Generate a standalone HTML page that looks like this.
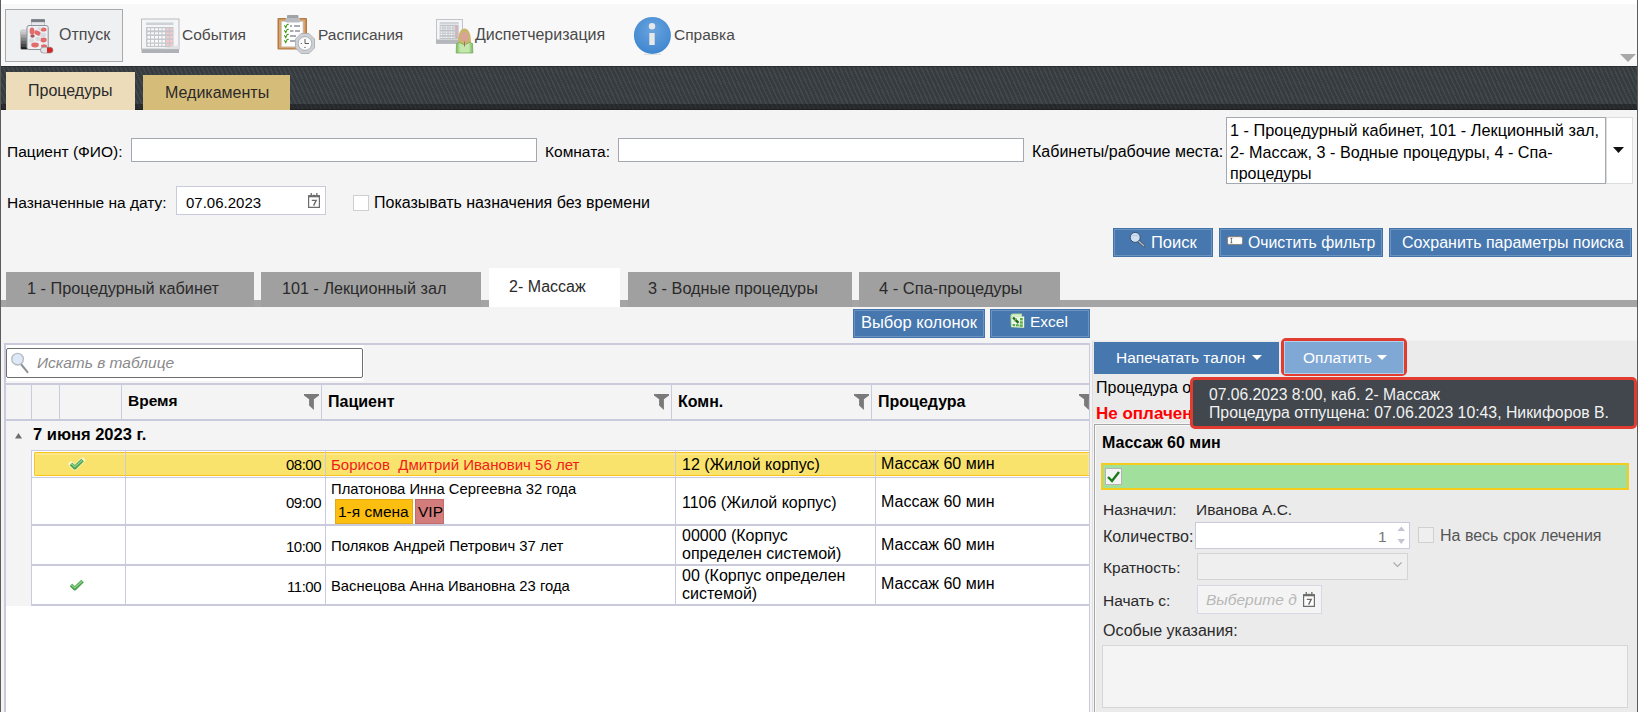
<!DOCTYPE html>
<html><head><meta charset="utf-8">
<style>
html,body{margin:0;padding:0;width:1639px;height:712px;overflow:hidden;background:#f4f4f4;}
body{position:relative;font-family:"Liberation Sans",sans-serif;color:#000;}
.a{position:absolute;box-sizing:border-box;}
.t{position:absolute;white-space:nowrap;line-height:1;font-size:15.5px;}
.b{font-weight:bold;}
.btn{position:absolute;box-sizing:border-box;background:#4677ae;border:1px solid #4472aa;box-shadow:inset 0 0 0 1px #6a93c0;}
.w{color:#fff;}
.vl{position:absolute;width:1px;background:#c9cadc;}
.hl{position:absolute;height:2px;background:#c9cadc;}
</style></head><body>

<!-- ===== TOP TOOLBAR ===== -->
<div class="a" style="left:0;top:0;width:1639px;height:4px;background:#fff"></div>
<div class="a" style="left:0;top:4px;width:1639px;height:62px;background:#f8f8f8"></div>
<div class="a" style="left:5px;top:9px;width:118px;height:53px;border:1px solid #a9a9a9;background:#eff0f2"></div>

<svg class="a" style="left:16px;top:15px" width="42" height="42" viewBox="0 0 42 42">
<defs>
<linearGradient id="can" x1="0" y1="0" x2="0" y2="1"><stop offset="0" stop-color="#e0e0e0"/><stop offset="0.45" stop-color="#808080"/><stop offset="1" stop-color="#101010"/></linearGradient>
<linearGradient id="lid" x1="0" y1="0" x2="0" y2="1"><stop offset="0" stop-color="#8a8f96"/><stop offset="1" stop-color="#5d6168"/></linearGradient>
</defs>
<rect x="4.5" y="15" width="7.5" height="19.5" rx="1.5" fill="url(#can)" stroke="#b4b4b4" stroke-width="0.7"/>
<path d="M5.5 19H11.5M5.5 22H11.5M5.5 25H11.5M5.5 28H11.5M5.5 31H11.5" stroke="#ffffff" stroke-opacity="0.25" stroke-width="0.8"/>
<rect x="15" y="4" width="14" height="3.4" rx="0.8" fill="url(#lid)"/>
<rect x="15.6" y="7" width="12.8" height="4" fill="#e6e8ec" stroke="#a8adb5" stroke-width="0.6"/>
<rect x="11" y="10.5" width="21.2" height="24" rx="2" fill="#eef0f3" stroke="#8b929c" stroke-width="1"/>
<g fill="#e26b6b">
<ellipse cx="16" cy="16" rx="2.4" ry="3.6"/><ellipse cx="21.5" cy="18" rx="3.4" ry="2.3" transform="rotate(25 21.5 18)"/>
<ellipse cx="27.5" cy="14.5" rx="3" ry="2"/><ellipse cx="27.5" cy="25" rx="3.2" ry="2.4"/>
<ellipse cx="19" cy="30" rx="3.8" ry="2.4"/><ellipse cx="28" cy="31" rx="3" ry="1.8"/>
</g>
<g fill="#d8dce0">
<ellipse cx="27" cy="20" rx="3.2" ry="2.2"/><ellipse cx="22" cy="24" rx="2.8" ry="2.2"/><ellipse cx="15.5" cy="25.5" rx="2.5" ry="2.3"/><ellipse cx="23.5" cy="13.5" rx="2" ry="1.6"/>
</g>
<ellipse cx="16.5" cy="21" rx="2.2" ry="1.8" fill="#a05a5a"/>
<rect x="24.5" y="32.2" width="12.5" height="5.8" rx="2.9" fill="#d42828"/>
<rect x="24.5" y="32.2" width="6.5" height="5.8" rx="2.9" fill="#dde4ea"/>
<rect x="28" y="32.2" width="3" height="5.8" fill="#dde4ea"/>
<rect x="24.5" y="32.2" width="12.5" height="5.8" rx="2.9" fill="none" stroke="#8a8a8a" stroke-width="0.6"/>
</svg>
<svg class="a" style="left:138px;top:15px" width="44" height="42" viewBox="0 0 44 42">
<rect x="3.5" y="33" width="37.5" height="5" fill="#aeb2b6"/>
<rect x="3.5" y="4" width="37.5" height="30" fill="#f3f5f7" stroke="#b8bcc0" stroke-width="1"/>
<rect x="8" y="7.5" width="27.5" height="2.5" fill="#ced2d6"/>
<rect x="8" y="12" width="27.5" height="20" fill="#c4c8cc"/>
<g fill="#fafafa">
<rect x="9.5" y="13.3" width="2.5" height="2"/><rect x="13" y="13.3" width="3" height="2"/><rect x="17" y="13.3" width="3" height="2"/><rect x="21" y="13.3" width="2.5" height="2"/><rect x="24.5" y="13.3" width="2.5" height="2"/>
<rect x="9.5" y="17.3" width="2.5" height="2"/><rect x="13" y="17.3" width="3" height="2"/><rect x="17" y="17.3" width="3" height="2"/><rect x="21" y="17.3" width="2.5" height="2"/><rect x="24.5" y="17.3" width="2.5" height="2"/>
<rect x="9.5" y="21" width="2.5" height="2.5"/><rect x="13" y="21" width="3" height="2.5"/><rect x="17" y="21" width="3" height="2.5"/><rect x="21" y="21" width="2.5" height="2.5"/><rect x="24.5" y="21" width="2.5" height="2.5"/>
<rect x="9.5" y="25" width="2.5" height="2.5"/><rect x="13" y="25" width="3" height="2.5"/><rect x="17" y="25" width="3" height="2.5"/><rect x="21" y="25" width="2.5" height="2.5"/><rect x="24.5" y="25" width="2.5" height="2.5"/>
<rect x="9.5" y="28.8" width="2.5" height="2"/><rect x="13" y="28.8" width="3" height="2"/><rect x="17" y="28.8" width="3" height="2"/><rect x="21" y="28.8" width="2.5" height="2"/><rect x="24.5" y="28.8" width="2.5" height="2"/>
</g>
<g fill="#f4c8cc">
<rect x="28" y="13.3" width="3" height="2"/><rect x="32" y="13.3" width="3" height="2"/>
<rect x="28" y="17.3" width="3" height="2"/><rect x="32" y="17.3" width="3" height="2"/>
<rect x="28" y="21" width="3" height="2.5"/><rect x="32" y="21" width="3" height="2.5"/>
<rect x="28" y="25" width="3" height="2.5"/><rect x="32" y="25" width="3" height="2.5"/>
<rect x="28" y="28.8" width="3" height="2"/><rect x="32" y="28.8" width="3" height="2"/>
</g>
<path d="M20 34 L41 30 L41 34 Z" fill="#e0e3e6"/>
</svg>
<svg class="a" style="left:274px;top:12px" width="44" height="44" viewBox="0 0 44 44">
<rect x="3.5" y="6" width="29.5" height="31.5" rx="1" fill="#b37a44"/>
<rect x="5" y="7.3" width="26.5" height="29" fill="#d9a36a"/>
<rect x="7.5" y="9.3" width="21.5" height="25.5" fill="#fff" stroke="#c5cbd2" stroke-width="0.8"/>
<rect x="13" y="3" width="11.5" height="4" rx="1" fill="#9fa3a8"/>
<rect x="11.5" y="6" width="14.5" height="4.5" rx="1" fill="#b9bdc2"/>
<g stroke="#3a9a10" stroke-width="1.1" fill="none">
<path d="M10.4 13.2 L11.8 15.6 L13.2 12.4 L14.8 12.2"/><path d="M10.4 18.2 L11.8 20.6 L13.2 17.4 L14.8 17.2"/><path d="M10.4 23.2 L11.8 25.6 L13.2 22.4 L14.8 22.2"/><path d="M10.4 28.2 L11.8 30.6 L13.2 27.4 L14.8 27.2"/>
</g>
<g fill="#a9adb2"><rect x="16" y="13" width="2" height="2"/><rect x="20" y="13" width="6" height="2"/><rect x="16" y="18" width="3.5" height="2"/><rect x="21" y="18" width="5" height="2"/><rect x="16" y="23" width="6" height="2"/><rect x="16" y="28" width="5" height="2"/></g>
<path d="M27 21.5 L35 21.5 L40.5 27 L40.5 36 L35 41.5 L27 41.5 L21.5 36 L21.5 27 Z" fill="#cdd0d4" stroke="#a4a8ad" stroke-width="0.8" stroke-linejoin="round"/>
<circle cx="31" cy="31.5" r="6.8" fill="#fbfbfb" stroke="#9a9ea2" stroke-width="0.7"/>
<path d="M31 27 V31.5 H35" stroke="#333" stroke-width="0.8" fill="none"/>
<circle cx="27.3" cy="31.5" r="0.6" fill="#333"/><circle cx="31" cy="35.3" r="0.6" fill="#333"/>
</svg>
<svg class="a" style="left:432px;top:14px" width="46" height="42" viewBox="0 0 46 42">
<defs><linearGradient id="bod" x1="0" y1="0" x2="1" y2="0"><stop offset="0" stop-color="#7cb860"/><stop offset="0.25" stop-color="#c4e8ac"/><stop offset="0.75" stop-color="#c4e8ac"/><stop offset="1" stop-color="#7cb860"/></linearGradient></defs>
<rect x="4.5" y="5.5" width="26" height="24" fill="#f3f5f7" stroke="#c0c4c8" stroke-width="1"/>
<rect x="4" y="25.5" width="27" height="4" fill="#b4b8bc"/>
<rect x="7.7" y="8" width="19" height="2.5" fill="#d0d4d8"/>
<rect x="7.7" y="11" width="19" height="14" fill="#bfc3c8"/>
<g fill="#f8f8f8">
<path d="M8.5 12.3h2v1.2h-2zM11.5 12.3h1.2v1.2h-1.2zM13.5 12.3h2v1.2h-2zM16.5 12.3h1.2v1.2h-1.2zM18.5 12.3h2v1.2h-2zM21.5 12.3h1.2v1.2h-1.2z"/>
<path d="M8.5 14.5h2v1.2h-2zM11.5 14.5h1.2v1.2h-1.2zM13.5 14.5h2v1.2h-2zM16.5 14.5h1.2v1.2h-1.2zM18.5 14.5h2v1.2h-2zM21.5 14.5h1.2v1.2h-1.2z"/>
<path d="M8.5 17.5h2v1.2h-2zM11.5 17.5h1.2v1.2h-1.2zM13.5 17.5h2v1.2h-2zM16.5 17.5h1.2v1.2h-1.2zM18.5 17.5h2v1.2h-2zM21.5 17.5h1.2v1.2h-1.2z"/>
<path d="M8.5 19.7h2v1.2h-2zM11.5 19.7h1.2v1.2h-1.2zM13.5 19.7h2v1.2h-2zM16.5 19.7h1.2v1.2h-1.2zM18.5 19.7h2v1.2h-2zM21.5 19.7h1.2v1.2h-1.2z"/>
<path d="M8.5 22.7h2v1.2h-2zM11.5 22.7h1.2v1.2h-1.2zM13.5 22.7h2v1.2h-2zM16.5 22.7h1.2v1.2h-1.2zM18.5 22.7h2v1.2h-2zM21.5 22.7h1.2v1.2h-1.2z"/>
</g>
<g fill="#f0a0a8"><path d="M23.5 12.3h2v1.2h-2zM23.5 14.5h2v1.2h-2zM23.5 17.5h2v1.2h-2zM23.5 19.7h2v1.2h-2zM23.5 22.7h2v1.2h-2z"/></g>
<path d="M26 30 Q26 14.5 32.5 14.5 Q39 14.5 39 30 Z" fill="#c8b66a"/>
<path d="M24.5 29.5 L27.5 28.5 L32.5 31 L37.5 28.5 L40.5 29.5 L40.8 39 H24.2 Z" fill="url(#bod)" stroke="#6aa850" stroke-width="0.7"/>
<ellipse cx="32.5" cy="22.8" rx="3.9" ry="4.8" fill="#d9a398"/>
<path d="M32.5 27.5 V32.5" stroke="#b06a6a" stroke-width="1"/>
</svg>
<svg class="a" style="left:632px;top:15px" width="42" height="42" viewBox="0 0 42 42">
<defs><radialGradient id="ig" cx="0.5" cy="0.35" r="0.65"><stop offset="0" stop-color="#6aa4de"/><stop offset="1" stop-color="#3f86d0"/></radialGradient></defs>
<circle cx="20.4" cy="20.4" r="18.5" fill="url(#ig)"/>
<rect x="17.3" y="18" width="5.4" height="12" fill="#e8e8e8"/>
<circle cx="20" cy="11.3" r="3.2" fill="#e8e8e8"/>
<path d="M12 39.3 H29" stroke="#c8c8c8" stroke-width="0.6"/>
</svg>

<div class="t" style="left:59px;top:27px;font-size:16px;color:#4a4a4a">Отпуск</div>
<div class="t" style="left:182px;top:27px;color:#4a4a4a">События</div>
<div class="t" style="left:318px;top:27px;color:#4a4a4a">Расписания</div>
<div class="t" style="left:475px;top:27px;font-size:16px;color:#4a4a4a">Диспетчеризация</div>
<div class="t" style="left:674px;top:27px;color:#4a4a4a">Справка</div>
<svg class="a" style="left:1620px;top:54px" width="16" height="9"><path d="M0 0H16L8 8Z" fill="#a8a8a8"/></svg>

<!-- ===== DARK BAR ===== -->
<div class="a" style="left:1px;top:66px;width:1638px;height:44px;background:repeating-linear-gradient(65deg,#363b3f 0 2.6px,#43484c 2.6px 4.1px);border-top:1px solid #2a2e31"></div>
<div class="a" style="left:1px;top:104px;width:1638px;height:6px;background:repeating-linear-gradient(65deg,#25292c 0 2.6px,#2c3033 2.6px 4.1px);border-bottom:1px solid #1e2124"></div>
<div class="a" style="left:6px;top:72px;width:129px;height:38px;background:#ecdcb9"></div>
<div class="a" style="left:143px;top:75px;width:147px;height:35px;background:#d6bc79"></div>
<div class="t" style="left:28px;top:83px;font-size:16px;color:#2a2a2a">Процедуры</div>
<div class="t" style="left:165px;top:85px;font-size:16px;color:#2a2a2a">Медикаменты</div>

<!-- ===== FORM ===== -->
<div class="t" style="left:7px;top:144px">Пациент (ФИО):</div>
<div class="a" style="left:131px;top:138px;width:406px;height:24px;border:1px solid #a4a8b1;background:#fff"></div>
<div class="t" style="left:545px;top:144px">Комната:</div>
<div class="a" style="left:618px;top:138px;width:406px;height:24px;border:1px solid #a4a8b1;background:#fff"></div>
<div class="t" style="left:1032px;top:144px;font-size:16px">Кабинеты/рабочие места:</div>
<div class="a" style="left:1226px;top:117px;width:380px;height:67px;border:1px solid #a4a8b1;background:#fff"></div>
<div class="t" style="left:1230px;top:122px;font-size:16.3px">1 - Процедурный кабинет, 101 - Лекционный зал,</div>
<div class="t" style="left:1230px;top:144px;font-size:16.2px">2- Массаж, 3 - Водные процедуры, 4 - Спа-</div>
<div class="t" style="left:1230px;top:166px;font-size:16px">процедуры</div>
<div class="a" style="left:1606px;top:117px;width:27px;height:67px;border:1px solid #dcdcdc;background:#fff"></div>
<svg class="a" style="left:1613px;top:147px" width="12" height="7"><path d="M0 0H11L5.5 6Z" fill="#111"/></svg>

<div class="t" style="left:7px;top:195px">Назначенные на дату:</div>
<div class="a" style="left:176px;top:186px;width:150px;height:29px;border:1px solid #c9cadc;background:#fff"></div>
<div class="t" style="left:186px;top:195px;font-size:15px">07.06.2023</div>
<svg class="a" style="left:307px;top:192px" width="14" height="16" viewBox="0 0 14 16">
<path d="M1.6 3.9 H12.4 V15.4 H1.6 Z" fill="#fff" stroke="#6c6c6c" stroke-width="1.2"/>
<path d="M1 3.3 H13 V5.3 H1 Z" fill="#6c6c6c"/>
<path d="M3.6 1 H4.9 V5 H3.6Z M9.2 1 H10.5 V5 H9.2Z M6.1 2.8 H7.9 V5 H6.1Z" fill="#6c6c6c"/>
<path d="M4.8 8.4 H9.2 L6.6 13.6" stroke="#6c6c6c" stroke-width="1.4" fill="none"/>
</svg>
<div class="a" style="left:353px;top:195px;width:16px;height:16px;border:1px solid #cfcfcf;background:#fff"></div>
<div class="t" style="left:374px;top:195px;font-size:16px">Показывать назначения без времени</div>

<!-- buttons -->
<div class="btn" style="left:1113px;top:228px;width:100px;height:29px"></div>
<svg class="a" style="left:1128px;top:230px" width="18" height="18" viewBox="0 0 18 18">
<path d="M10 10.5 L15.8 15.8" stroke="#3a4f66" stroke-width="2.6" stroke-linecap="round"/>
<path d="M10 10.5 L15.8 15.8" stroke="#b8bcc0" stroke-width="1.4" stroke-linecap="round"/>
<circle cx="7.2" cy="7.4" r="5" fill="#cfe0f2" stroke="#34506e" stroke-width="1"/>
<path d="M3.5 6.3 Q7 4.5 10.5 6" stroke="#a8c4e0" stroke-width="0.8" fill="none"/>
</svg>
<div class="t w" style="left:1151px;top:234px;font-size:16.5px">Поиск</div>
<div class="btn" style="left:1219px;top:228px;width:164px;height:29px"></div>
<svg class="a" style="left:1226px;top:236px" width="18" height="10" viewBox="0 0 18 10">
<rect x="1.5" y="0.7" width="15" height="7.8" rx="1.6" fill="#fff" stroke="#8f8070" stroke-width="0.9"/>
<path d="M5.4 2.3 V6.8 M4.4 2.3 H6.4 M4.4 6.8 H6.4" stroke="#555" stroke-width="0.8"/>
</svg>
<div class="t w" style="left:1248px;top:235px;font-size:15.8px">Очистить фильтр</div>
<div class="btn" style="left:1389px;top:228px;width:243px;height:29px"></div>
<div class="t w" style="left:1402px;top:235px;font-size:16px">Сохранить параметры поиска</div>

<!-- ===== ROOM TABS ===== -->
<div class="a" style="left:1px;top:300px;width:1638px;height:7px;background:#a5a5a5"></div>
<div class="a" style="left:6px;top:272px;width:248px;height:35px;background:#a0a0a0"></div>
<div class="a" style="left:261px;top:272px;width:220px;height:35px;background:#a0a0a0"></div>
<div class="a" style="left:489px;top:268px;width:131px;height:39px;background:#fff"></div>
<div class="a" style="left:628px;top:272px;width:224px;height:35px;background:#a0a0a0"></div>
<div class="a" style="left:859px;top:272px;width:201px;height:35px;background:#a0a0a0"></div>
<div class="t" style="left:27px;top:280px;font-size:16.3px;color:#2a2a2a">1 - Процедурный кабинет</div>
<div class="t" style="left:282px;top:280px;font-size:16.2px;color:#2a2a2a">101 - Лекционный зал</div>
<div class="t" style="left:509px;top:279px;font-size:16px;color:#2a2a2a">2- Массаж</div>
<div class="t" style="left:648px;top:280px;font-size:16.3px;color:#2a2a2a">3 - Водные процедуры</div>
<div class="t" style="left:879px;top:280px;font-size:16.5px;color:#2a2a2a">4 - Спа-процедуры</div>

<div class="btn" style="left:853px;top:309px;width:132px;height:29px"></div>
<div class="t w" style="left:861px;top:314px;font-size:16.5px">Выбор колонок</div>
<div class="btn" style="left:990px;top:309px;width:100px;height:29px"></div>
<svg class="a" style="left:1008px;top:312px" width="18" height="18" viewBox="0 0 18 18">
<path d="M2.3 4 Q2.5 1.6 5 1.6 H14 V4.5 L16.3 4.3 V15.8 L3 15.2 Z" fill="#a8d890"/>
<path d="M3.2 4.6 Q3.5 2.5 5.3 2.5 H13.3 V4.6 Z" fill="#dcefd0"/>
<path d="M3.6 4.8 H16 V15.6 L3.6 15 Z" fill="#eef6ea"/>
<g fill="#5aae48"><rect x="12" y="6" width="2.8" height="2.4"/><rect x="12" y="9.3" width="2.8" height="2.4"/><rect x="11.6" y="12.4" width="3.2" height="2.4"/><rect x="4.6" y="12" width="2.6" height="2.2"/><rect x="8" y="12.2" width="2.8" height="2.2"/></g>
<path d="M5 5.5 L10.5 10.8" stroke="#1b6a14" stroke-width="2.4"/>
<path d="M8.5 6 L6 9.5" stroke="#7cc070" stroke-width="1.2"/>
</svg>
<div class="t w" style="left:1030px;top:314px;font-size:15.5px">Excel</div>

<!-- ===== TABLE ===== -->
<div class="a" style="left:4px;top:343px;width:1086px;height:380px;border:2px solid #c9cadc;border-right:1px solid #c9cadc;background:#fff"></div>
<div class="a" style="left:6px;top:345px;width:1083px;height:38px;background:#f4f4f4"></div>
<div class="a" style="left:6px;top:345px;width:358px;height:36px;background:#fff"></div><div class="a" style="left:6px;top:348px;width:357px;height:30px;border:1px solid #6e6e6e;border-radius:2px;background:#fff"></div>
<svg class="a" style="left:9px;top:351px" width="22" height="24" viewBox="0 0 22 24">
<path d="M12.3 13.5 L18.5 21.2" stroke="#8e9296" stroke-width="2" stroke-linecap="round"/>
<circle cx="8.6" cy="8.2" r="5.8" fill="#dde9f6" stroke="#b8bcc4" stroke-width="1.4"/>
</svg>
<div class="t" style="left:37px;top:355px;font-style:italic;color:#8a8a8a">Искать в таблице</div>
<div class="hl" style="left:6px;top:383px;width:1083px"></div>
<div class="a" style="left:6px;top:385px;width:1083px;height:34px;background:#f4f4f4"></div>
<div class="hl" style="left:6px;top:419px;width:1083px"></div>
<div class="vl" style="left:31px;top:385px;height:34px"></div>
<div class="vl" style="left:59px;top:385px;height:34px"></div>
<div class="vl" style="left:121px;top:385px;height:34px"></div>
<div class="vl" style="left:321px;top:385px;height:34px"></div>
<div class="vl" style="left:671px;top:385px;height:34px"></div>
<div class="vl" style="left:871px;top:385px;height:34px"></div>
<div class="t b" style="left:128px;top:393px;font-size:15.5px">Время</div>
<div class="t b" style="left:328px;top:394px;font-size:16px">Пациент</div>
<div class="t b" style="left:678px;top:394px;font-size:16px">Комн.</div>
<div class="t b" style="left:878px;top:394px;font-size:16px">Процедура</div>
<svg class="a" style="left:304px;top:394px" width="16" height="17" viewBox="0 0 16 17"><path d="M0 0 H15 V1.5 L9.9 5.3 V16 L5.1 11.6 V5.3 L0 1.5Z" fill="#7a7a7a"/></svg><svg class="a" style="left:654px;top:394px" width="16" height="17" viewBox="0 0 16 17"><path d="M0 0 H15 V1.5 L9.9 5.3 V16 L5.1 11.6 V5.3 L0 1.5Z" fill="#7a7a7a"/></svg><svg class="a" style="left:854px;top:394px" width="16" height="17" viewBox="0 0 16 17"><path d="M0 0 H15 V1.5 L9.9 5.3 V16 L5.1 11.6 V5.3 L0 1.5Z" fill="#7a7a7a"/></svg><div class="a" style="left:1079px;top:394px;width:10px;height:17px;overflow:hidden"><svg class="a" style="left:0;top:0" width="16" height="17" viewBox="0 0 16 17"><path d="M0 0 H15 V1.5 L9.9 5.3 V16 L5.1 11.6 V5.3 L0 1.5Z" fill="#7a7a7a"/></svg></div>

<div class="a" style="left:6px;top:421px;width:1083px;height:29px;background:#f4f4f4"></div>
<div class="a" style="left:6px;top:450px;width:25px;height:156px;background:#f4f4f4"></div>
<svg class="a" style="left:15px;top:433px" width="8" height="6"><path d="M0 5.5H7L3.5 0Z" fill="#6e6e6e"/></svg>
<div class="t b" style="left:33px;top:426px;font-size:16.5px">7 июня 2023 г.</div>

<!-- rows -->
<div class="a" style="left:31px;top:450px;width:1058px;height:156px;background:#fff"></div>
<div class="hl" style="left:31px;top:450px;width:1058px;height:1px"></div>
<div class="a" style="left:34px;top:452px;width:1055px;height:24px;background:#f9e36c;border:1px solid #fbc21c;border-right:none;border-radius:2px 0 0 2px;box-shadow:inset 0 1px 0 1px #fbe78c"></div>
<div class="hl" style="left:31px;top:477px;width:1058px;height:1px"></div>
<div class="hl" style="left:31px;top:524px;width:1058px"></div>
<div class="hl" style="left:31px;top:564px;width:1058px"></div>
<div class="hl" style="left:31px;top:604px;width:1058px"></div>
<div class="vl" style="left:31px;top:450px;height:156px"></div>
<div class="vl" style="left:125px;top:450px;height:156px"></div>
<div class="vl" style="left:325px;top:450px;height:156px"></div>
<div class="vl" style="left:675px;top:450px;height:156px"></div>
<div class="vl" style="left:875px;top:450px;height:156px"></div>
<svg class="a" style="left:68px;top:457px" width="18" height="15" viewBox="0 0 18 15"><path d="M3 7 L6.8 10.6 L14.6 3" stroke="#fff" stroke-width="5.2" fill="none" stroke-linecap="round" stroke-linejoin="round" opacity="0.6"/><path d="M3 7 L6.8 10.6 L14.6 3" stroke="#4a9e4c" stroke-width="3.6" fill="none" stroke-linejoin="round"/><path d="M3.4 6.8 L6.8 9.9 L14.3 2.9" stroke="#8fd68a" stroke-width="1.3" fill="none"/></svg><svg class="a" style="left:68px;top:578px" width="18" height="15" viewBox="0 0 18 15"><path d="M3 7 L6.8 10.6 L14.6 3" stroke="#fff" stroke-width="5.2" fill="none" stroke-linecap="round" stroke-linejoin="round" opacity="0.6"/><path d="M3 7 L6.8 10.6 L14.6 3" stroke="#4a9e4c" stroke-width="3.6" fill="none" stroke-linejoin="round"/><path d="M3.4 6.8 L6.8 9.9 L14.3 2.9" stroke="#8fd68a" stroke-width="1.3" fill="none"/></svg>

<div class="t" style="left:241px;width:80px;text-align:right;top:457px;font-size:15px;letter-spacing:-0.5px;margin-right:-0.5px">08:00</div>
<div class="t" style="left:331px;top:457px;font-size:15px;color:#f01c1c">Борисов&nbsp; Дмитрий Иванович 56 лет</div>
<div class="t" style="left:682px;top:457px;font-size:16px">12 (Жилой корпус)</div>
<div class="t" style="left:881px;top:456px;font-size:16px">Массаж 60 мин</div>

<div class="t" style="left:241px;width:80px;text-align:right;top:495px;font-size:15px;letter-spacing:-0.5px">09:00</div>
<div class="t" style="left:331px;top:482px;font-size:14.8px">Платонова Инна Сергеевна 32 года</div>
<div class="a" style="left:335px;top:499px;width:78px;height:25px;background:#fcbf10;border:1px solid #e2ab18"></div>
<div class="a" style="left:415px;top:499px;width:29px;height:25px;background:#d27c7b;border:1px solid #c46a6a"></div>
<div class="t" style="left:338px;top:504px;font-size:15.5px">1-я смена</div>
<div class="t" style="left:418px;top:504px;font-size:15.5px">VIP</div>
<div class="t" style="left:682px;top:495px;font-size:16px">1106 (Жилой корпус)</div>
<div class="t" style="left:881px;top:494px;font-size:16px">Массаж 60 мин</div>

<div class="t" style="left:241px;width:80px;text-align:right;top:539px;font-size:15px;letter-spacing:-0.5px">10:00</div>
<div class="t" style="left:331px;top:539px;font-size:14.9px">Поляков Андрей Петрович 37 лет</div>
<div class="t" style="left:682px;top:528px;font-size:16px">00000 (Корпус</div>
<div class="t" style="left:682px;top:546px;font-size:16px">определен системой)</div>
<div class="t" style="left:881px;top:537px;font-size:16px">Массаж 60 мин</div>

<div class="t" style="left:241px;width:80px;text-align:right;top:579px;font-size:15px;letter-spacing:-0.5px">11:00</div>
<div class="t" style="left:331px;top:579px;font-size:14.8px">Васнецова Анна Ивановна 23 года</div>
<div class="t" style="left:682px;top:568px;font-size:16px">00 (Корпус определен</div>
<div class="t" style="left:682px;top:586px;font-size:16px">системой)</div>
<div class="t" style="left:881px;top:576px;font-size:16px">Массаж 60 мин</div>

<!-- ===== RIGHT PANEL ===== -->
<div class="a" style="left:1092px;top:340px;width:547px;height:372px;background:#ebebeb;border-left:1px solid #dedede;border-top:1px solid #f0f0f0"></div>
<div class="btn" style="left:1094px;top:342px;width:185px;height:32px;box-shadow:none;border:none"></div>
<div class="t w" style="left:1116px;top:350px;font-size:15.5px">Напечатать талон</div>
<svg class="a" style="left:1252px;top:355px" width="11" height="6"><path d="M0 0H10L5 5Z" fill="#fff"/></svg>
<div class="a" style="left:1281px;top:338px;width:126px;height:38px;border:3px solid #e23b30;border-radius:5px"></div>
<div class="a" style="left:1284px;top:341px;width:120px;height:33px;background:#7fa8d4;border:1px solid #b0d0ec"></div>
<div class="t w" style="left:1303px;top:350px;font-size:15.5px">Оплатить</div>
<svg class="a" style="left:1377px;top:355px" width="11" height="6"><path d="M0 0H10L5 5Z" fill="#fff"/></svg>

<div class="t" style="left:1096px;top:380px;font-size:16px">Процедура отпущена</div>
<div class="t b" style="left:1096px;top:405px;font-size:17px;color:#f00">Не оплачена</div>

<div class="a" style="left:1093px;top:423px;width:546px;height:300px;border:1px solid #f6f6f6;border-right:none;background:#ebebeb"></div><div class="a" style="left:1094px;top:424px;width:545px;height:300px;border:1px solid #a6a6a6;border-right:none;box-shadow:inset 1px 1px 0 #fafafa"></div>
<div class="t b" style="left:1102px;top:435px;font-size:16px">Массаж 60 мин</div>
<div class="a" style="left:1101px;top:463px;width:528px;height:27px;background:#a0e09c;border:2px solid #f4cc1c"></div>
<div class="a" style="left:1105px;top:468px;width:17px;height:17px;border:1px solid #b4b4b4;background:#f4f4f4"></div>
<svg class="a" style="left:1106px;top:470px" width="16" height="14"><path d="M2 7 L6 11 L13 2" stroke="#1a7a1a" stroke-width="2.4" fill="none"/></svg>
<div class="t" style="left:1103px;top:502px;font-size:15.5px;color:#2a2a2a">Назначил:</div>
<div class="t" style="left:1196px;top:502px;font-size:15.5px;color:#2a2a2a">Иванова А.С.</div>
<div class="t" style="left:1103px;top:529px;font-size:16px;color:#2a2a2a">Количество:</div>
<div class="a" style="left:1195px;top:522px;width:215px;height:27px;border:1px solid #c9cadc;background:#fff"></div>
<div class="t" style="left:1378px;top:529px;font-size:15.5px;color:#777">1</div>
<svg class="a" style="left:1397px;top:526px" width="9" height="19"><path d="M0.5 5H8L4.25 0.5Z M0.5 13H8L4.25 18Z" fill="#c4c4d4"/></svg>
<div class="a" style="left:1418px;top:527px;width:16px;height:16px;border:1px solid #d0d0d0;background:#efefef"></div>
<div class="t" style="left:1440px;top:528px;font-size:16px;color:#555">На весь срок лечения</div>
<div class="t" style="left:1103px;top:560px;font-size:15.5px;color:#2a2a2a">Кратность:</div>
<div class="a" style="left:1197px;top:553px;width:211px;height:27px;border:1px solid #d4d4d4;background:#efefef"></div>
<svg class="a" style="left:1393px;top:562px" width="9" height="6"><path d="M0.5 0.5 L4.5 4.5 L8.5 0.5" stroke="#aaa" stroke-width="1.2" fill="none"/></svg>
<div class="t" style="left:1103px;top:593px;font-size:15.5px;color:#2a2a2a">Начать с:</div>
<div class="a" style="left:1197px;top:585px;width:125px;height:29px;border:1px solid #d8d8e4;background:#f4f4f4"></div>
<div class="t" style="left:1206px;top:592px;font-size:15.5px;font-style:italic;color:#b8b8b8">Выберите д</div>
<svg class="a" style="left:1302px;top:591px" width="14" height="16" viewBox="0 0 14 16">
<path d="M1.6 3.9 H12.4 V15.4 H1.6 Z" fill="#fff" stroke="#6c6c6c" stroke-width="1.2"/>
<path d="M1 3.3 H13 V5.3 H1 Z" fill="#6c6c6c"/>
<path d="M3.6 1 H4.9 V5 H3.6Z M9.2 1 H10.5 V5 H9.2Z M6.1 2.8 H7.9 V5 H6.1Z" fill="#6c6c6c"/>
<path d="M4.8 8.4 H9.2 L6.6 13.6" stroke="#6c6c6c" stroke-width="1.4" fill="none"/>
</svg>
<div class="t" style="left:1103px;top:623px;font-size:16px;color:#2a2a2a">Особые указания:</div>
<div class="a" style="left:1102px;top:645px;width:526px;height:63px;border:1px solid #d6d6d6;background:#f4f4f4"></div>

<!-- TOOLTIP -->
<div class="a" style="left:1190px;top:377px;width:447px;height:52px;background:#41474d;border:3px solid #e23b30;border-radius:5px"></div>
<div class="t" style="left:1209px;top:387px;font-size:15.7px;color:#f2f2f2">07.06.2023 8:00, каб. 2- Массаж</div>
<div class="t" style="left:1209px;top:405px;font-size:15.8px;color:#f2f2f2">Процедура отпущена: 07.06.2023 10:43, Никифоров В.</div>

<!-- page borders -->
<div class="a" style="left:0;top:0;width:1px;height:712px;background:#5c5c5c"></div>
<div class="a" style="left:1637px;top:0;width:1px;height:712px;background:#5c5c5c"></div><div class="a" style="left:1638px;top:0;width:1px;height:712px;background:#fff"></div>

</body></html>
